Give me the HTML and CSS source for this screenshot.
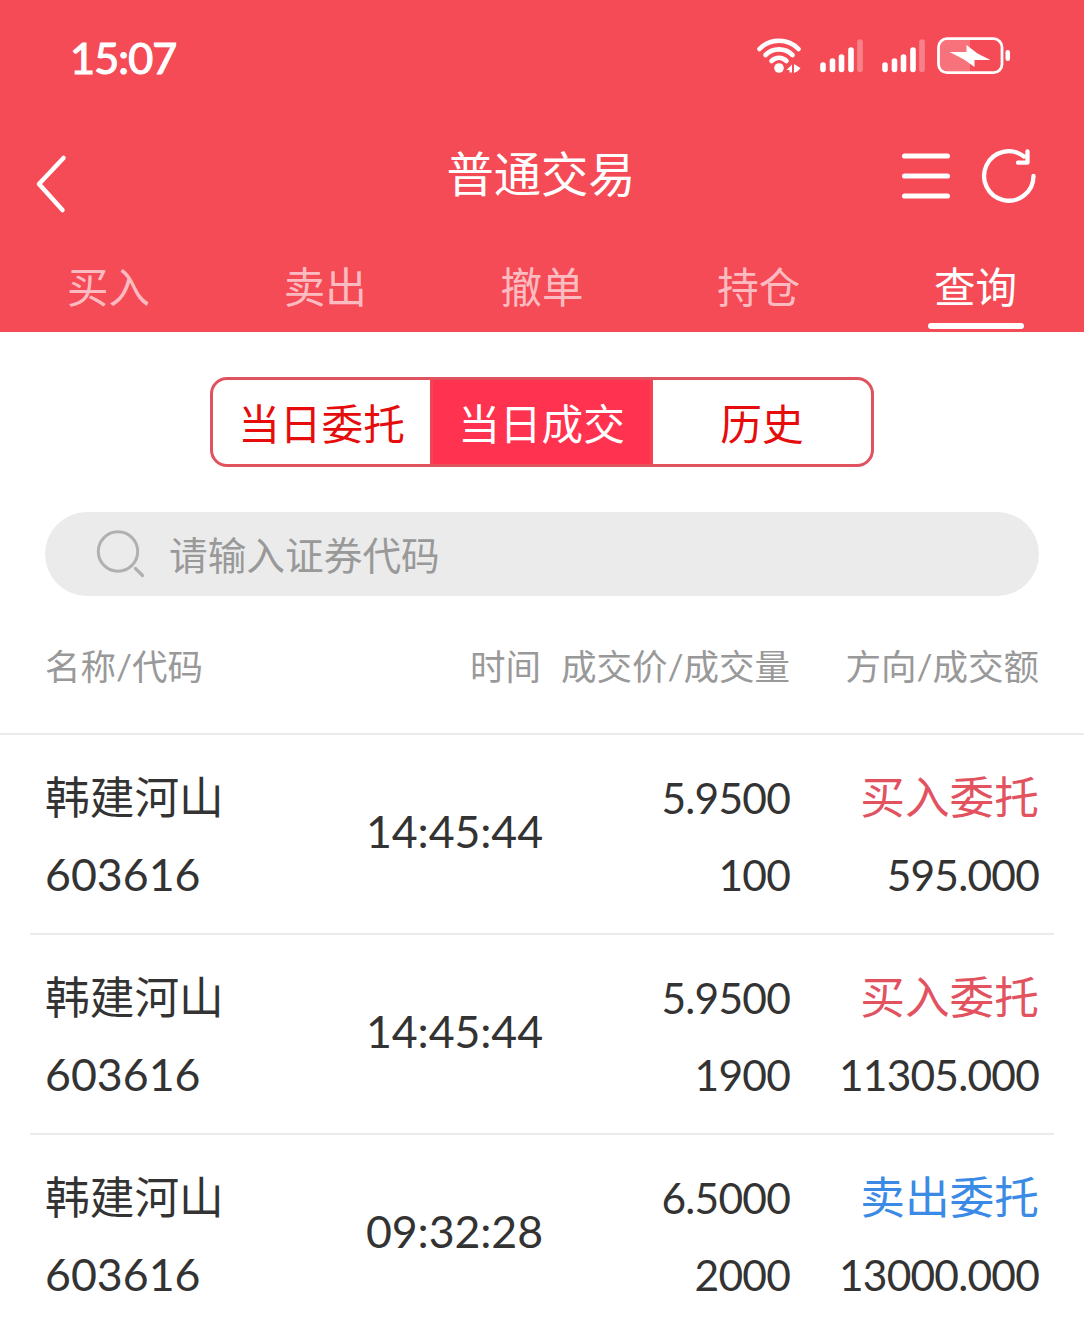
FILE: index.html
```html
<!DOCTYPE html>
<html lang="zh-CN">
<head>
    <meta charset="UTF-8">
    <meta name="viewport" content="width=device-width, initial-scale=1.0">
    <title>普通交易</title>
    <link rel="stylesheet" href="styles.css">
</head>
<body>
    <header class="header">
        <div class="status-bar">
            <span class="clock">15:07</span>
            <svg class="status-icons" width="256" height="40" viewBox="0 0 256 40" fill="none">
                <!-- wifi -->
                <g stroke="#fff" stroke-width="4.6" stroke-linecap="round">
                    <path d="M4.500 13C15 2 33 2 43.500 13"/>
                    <path d="M10.500 19C18 11.500 30 11.500 37.500 19"/>
                    <path d="M16.500 25C21 20.800 27 20.800 31.500 25"/>
                </g>
                <circle cx="24" cy="32" r="4.800" fill="#fff"/>
                <path d="M37 28.500v8h-2.500v-2.500h-3zM39 28l6.500 4-2.500 3-4 2z" fill="#fff"/>
                <!-- signal -->
                <g stroke="#fff" stroke-width="5.600" stroke-linecap="round">
                    <path d="M68 29v4.500M77.500 25v8.500M86.500 21v12.500M96 14v19.500"/>
                    <path d="M105 6v27.500" opacity=".3"/>
                    <path d="M130 29v4.500M139.500 25v8.500M148.500 21v12.500M158 14v19.500"/>
                    <path d="M167 6v27.500" opacity=".3"/>
                </g>
                <!-- battery -->
                <path d="M192 4h23v31h-23q-8-1-8-9V12q0-7 8-8z" fill="#fff" opacity=".22"/>
                <rect x="183.500" y="2.700" width="63.500" height="34" rx="8.500" stroke="#fff" stroke-width="2.800"/>
                <path d="M211.500 9l11 8.500 13 6.500h-16v7l-10.500-7.500-14.500-7.500h17z" fill="#fff"/>
                <rect x="250.500" y="14" width="4.500" height="11" rx="2.200" fill="#fff"/>
            </svg>
        </div>
        <div class="nav-bar">
            <svg class="back" width="34" height="64" viewBox="0 0 34 64" fill="none">
                <path d="M29.500 6L5 32 28.500 58" stroke="#fff" stroke-width="4.500" stroke-linecap="round" stroke-linejoin="round"/>
            </svg>
            <h1 class="title">普通交易</h1>
            <div class="actions">
                <svg width="50" height="60" viewBox="0 0 50 60">
                    <path d="M2.600 10h42.800M2.600 30h42.800M2.600 50h42.800" stroke="#fff" stroke-width="5.200" stroke-linecap="round"/>
                </svg>
                <svg width="60" height="60" viewBox="0 0 60 60" fill="none">
                    <path d="M53.500 30a24.700 24.700 0 1 1-9.500-19.500M47.500 5.500v11.200H38" stroke="#fff" stroke-width="4.300" stroke-linecap="round" stroke-linejoin="round"/>
                </svg>
            </div>
        </div>
        <nav class="tabs">
            <a class="tab">买入</a>
            <a class="tab">卖出</a>
            <a class="tab">撤单</a>
            <a class="tab">持仓</a>
            <a class="tab active">查询</a>
        </nav>
    </header>

    <main>
        <div class="segment">
            <div class="segment-item">当日委托</div>
            <div class="segment-item selected">当日成交</div>
            <div class="segment-item">历史</div>
        </div>

        <div class="search">
            <svg width="52" height="52" viewBox="0 0 52 52" fill="none" stroke="#b0b0b0">
                <circle cx="24" cy="23.500" r="19.700" stroke-width="3"/>
                <path d="M41.500 40.500l7 7" stroke-width="3.200" stroke-linecap="round"/>
            </svg>
            <span>请输入证券代码</span>
        </div>

        <div class="list-head">
            <span>名称/代码</span>
            <span>时间</span>
            <span>成交价/成交量</span>
            <span>方向/成交额</span>
        </div>

        <div class="list">
            <div class="row">
                <div class="stock"><p>韩建河山</p><p>603616</p></div>
                <div class="time">14:45:44</div>
                <div class="deal"><p>5.9500</p><p>100</p></div>
                <div class="amount"><p class="buy">买入委托</p><p>595.000</p></div>
            </div>
            <div class="row">
                <div class="stock"><p>韩建河山</p><p>603616</p></div>
                <div class="time">14:45:44</div>
                <div class="deal"><p>5.9500</p><p>1900</p></div>
                <div class="amount"><p class="buy">买入委托</p><p>11305.000</p></div>
            </div>
            <div class="row">
                <div class="stock"><p>韩建河山</p><p>603616</p></div>
                <div class="time">09:32:28</div>
                <div class="deal"><p>6.5000</p><p>2000</p></div>
                <div class="amount"><p class="sell">卖出委托</p><p>13000.000</p></div>
            </div>
        </div>
    </main>
</body>
</html>
```
FILE: styles.css
```css
* {
    box-sizing: border-box;
}

body {
    margin: 0;
    height: 1326px;
    overflow: hidden;
    background-color: #fff;
    color: #333;
    font-family: Lato, "Noto Sans CJK SC", sans-serif;
}

p {
    margin: 0;
}

svg {
    display: block;
}

.header {
    height: 332px;
    background-color: #f54b57;
    color: #fff;
}

.status-bar {
    display: flex;
    justify-content: space-between;
    align-items: center;
    height: 112px;
    padding: 0 73px 0 70px;
}

.clock {
    padding-top: 3px;
    font-size: 43px;
    font-weight: 400;
    line-height: 60px;
    letter-spacing: -0.8px;
    -webkit-text-stroke: 1.2px #fff;
}

.nav-bar {
    display: grid;
    grid-template-columns: 1fr auto 1fr;
    align-items: center;
    height: 128px;
    padding: 0 44px 0 34px;
}

.back {
    margin-top: 16px;
}

.title {
    margin: 0 0 4px 8px;
    font-size: 47.3px;
    font-weight: 400;
    line-height: 64px;
}

.actions {
    display: flex;
    justify-content: flex-end;
    gap: 28px;
}

.tabs {
    display: grid;
    grid-template-columns: repeat(5, 1fr);
    height: 92px;
}

.tab {
    display: flex;
    flex-direction: column;
    align-items: center;
    padding-top: 17px;
    font-size: 41.5px;
    line-height: 60px;
    color: rgba(255, 255, 255, 0.65);
}

.tab.active {
    color: #fff;
}

.tab.active::after {
    content: "";
    width: 96px;
    height: 6px;
    margin-top: 6px;
    border-radius: 3px;
    background-color: #fff;
}

.segment {
    display: grid;
    grid-template-columns: 217px 223px 1fr;
    width: 664px;
    height: 90px;
    margin: 45px auto 0;
    border: 3px solid #e0525e;
    border-radius: 17px;
    overflow: hidden;
}

.segment-item {
    text-align: center;
    font-size: 41.7px;
    line-height: 89px;
    color: #e60c0c;
}

.segment-item.selected {
    background-color: #ff334f;
    border-left: 3px solid #f04455;
    border-right: 3px solid #f04455;
    color: #fff;
}

.search {
    display: flex;
    align-items: center;
    gap: 23px;
    height: 84px;
    margin: 45px 45px 0;
    padding-left: 49px;
    border-radius: 42px;
    background-color: #ebebeb;
    font-size: 38.7px;
    color: #999;
}

.search span {
    margin-top: -3px;
}

.list-head,
.row {
    display: grid;
    grid-template-columns: 250px 246px 249px 249px;
}

.list-head {
    height: 139px;
    padding: 0 45px;
    border-bottom: 2px solid #ebebeb;
    font-size: 35.5px;
    line-height: 142px;
    color: #999;
}

.list-head span:not(:first-child) {
    text-align: right;
    white-space: nowrap;
}

.row {
    height: 200px;
    margin: 0 30px;
    padding: 24px 15px 0;
    border-bottom: 2px solid #ebebeb;
    font-size: 42.5px;
    line-height: 77px;
}

.stock {
    font-size: 44.7px;
}

.time {
    padding-top: 34px;
    margin-right: -2px;
    font-size: 44.7px;
    letter-spacing: -0.1px;
    text-align: right;
}

.deal,
.amount {
    text-align: right;
    letter-spacing: -0.8px;
}

.buy,
.sell {
    font-size: 44.7px;
    letter-spacing: 0;
}

.buy {
    color: #e2525f;
}

.sell {
    color: #3b8ae6;
}
```
